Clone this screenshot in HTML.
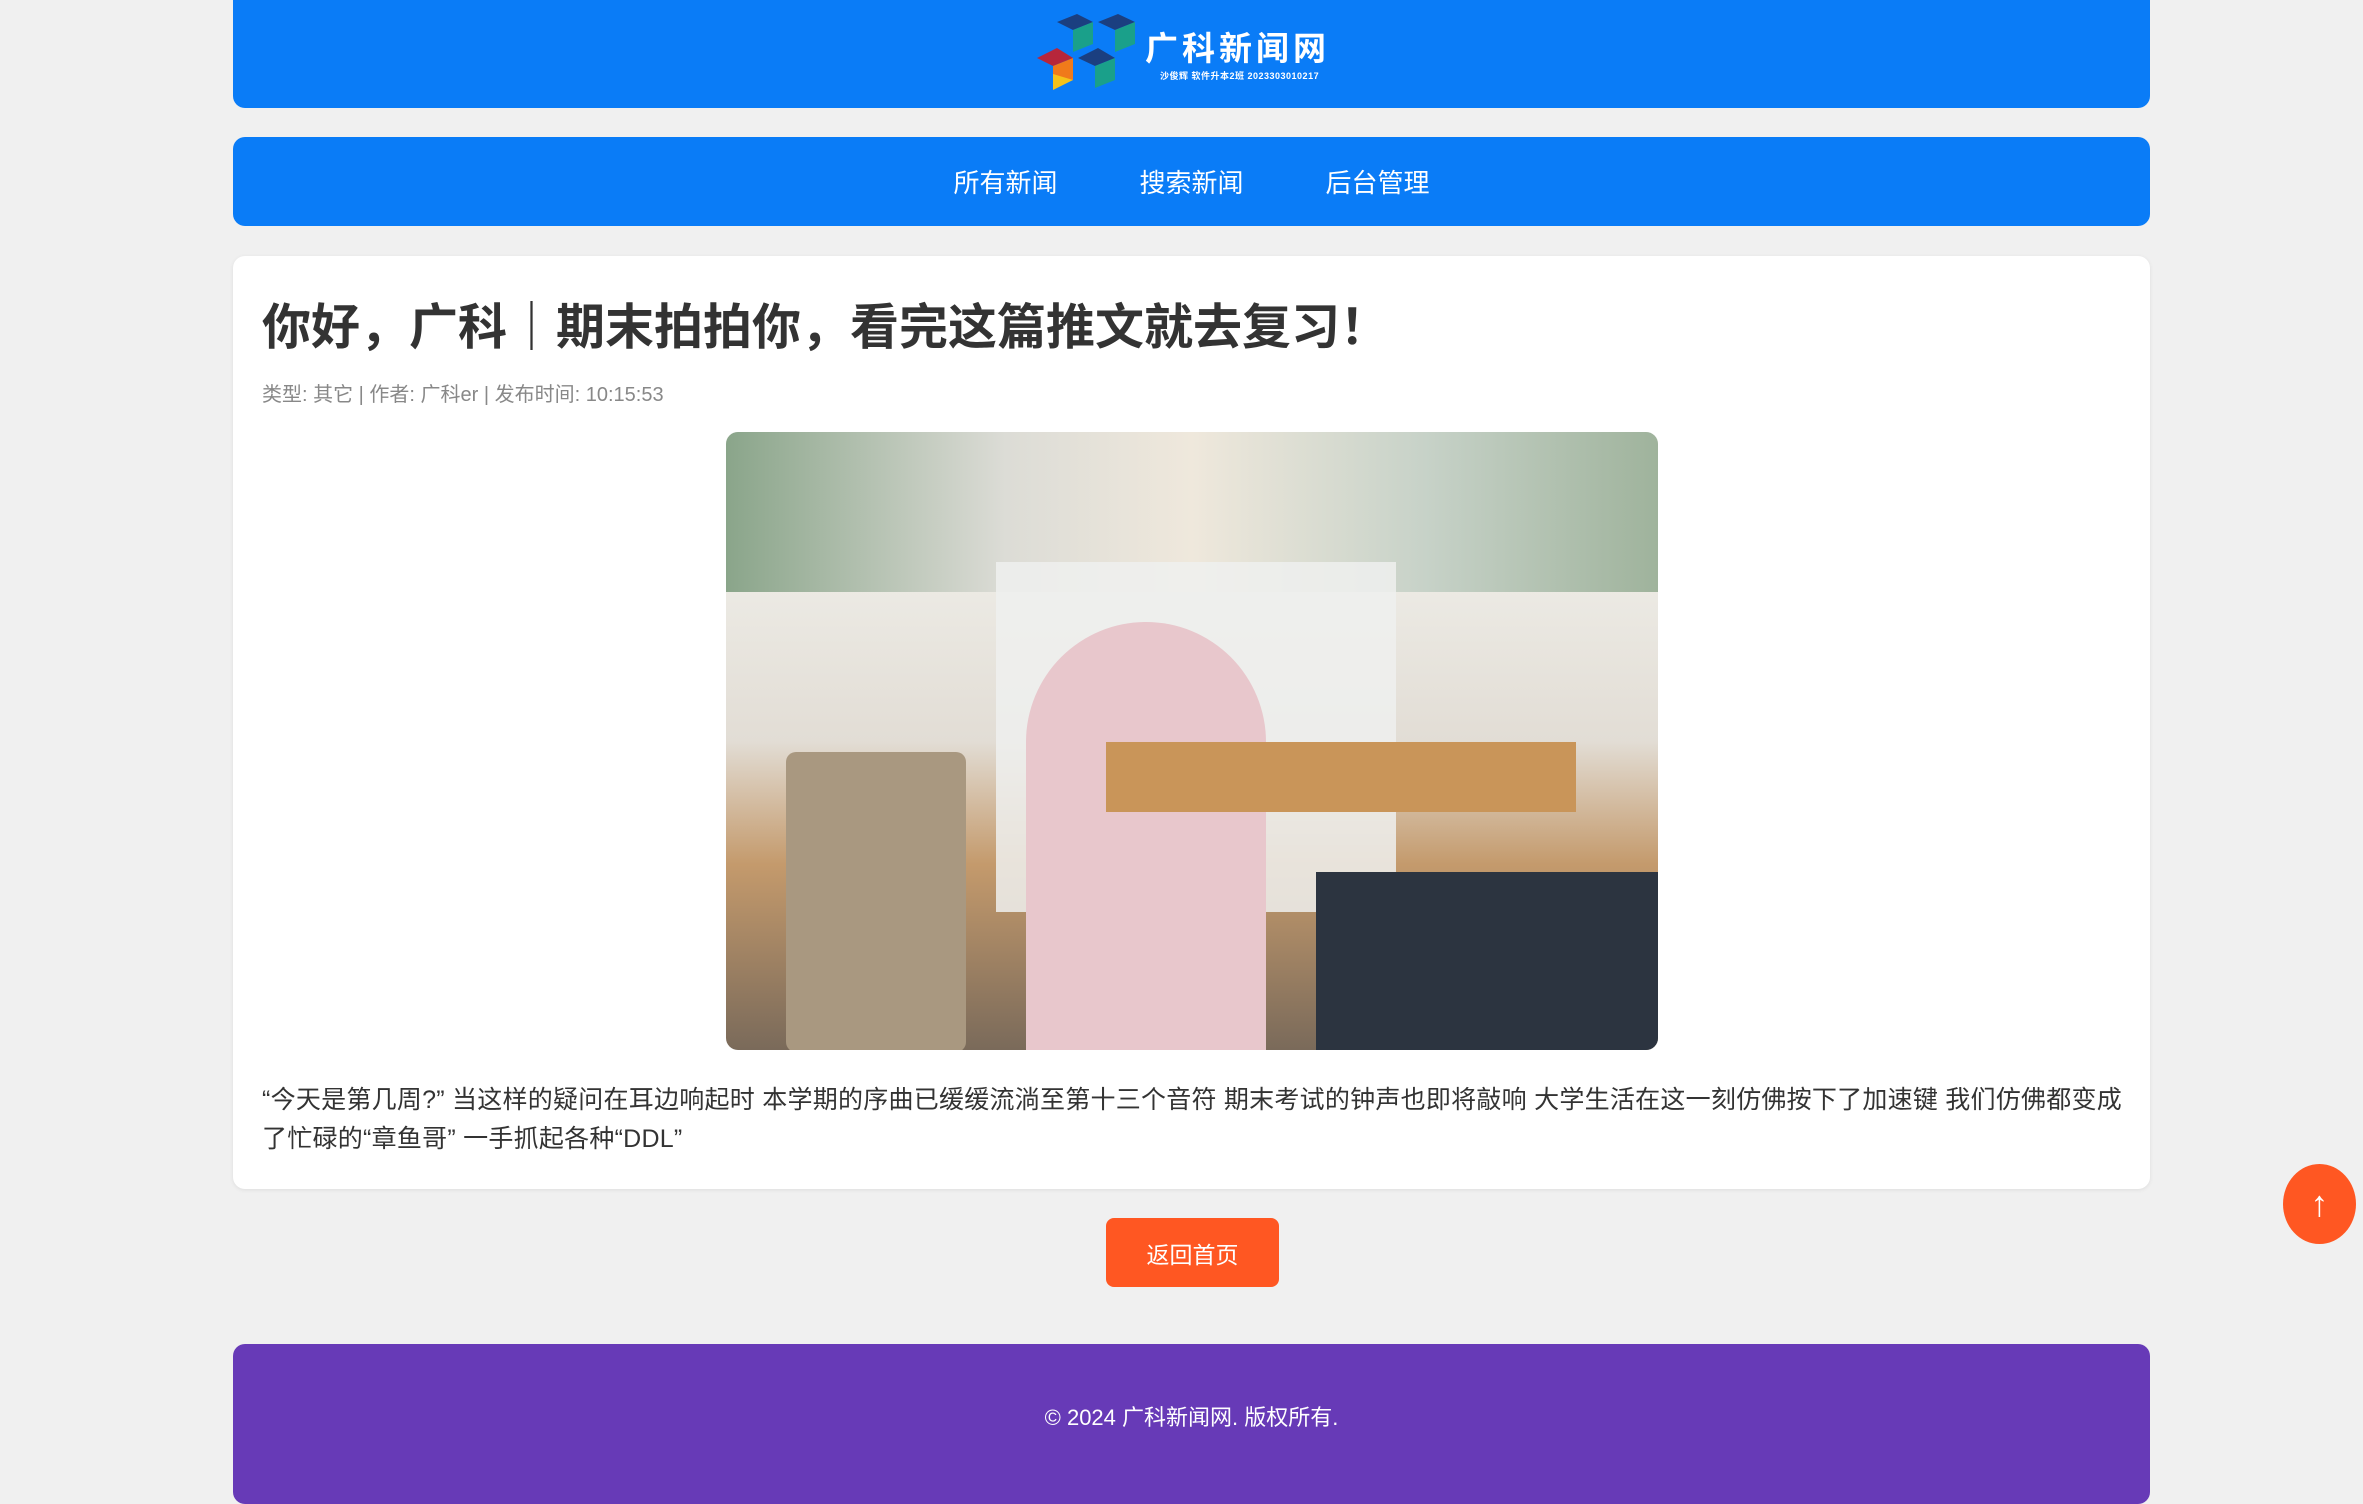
<!DOCTYPE html>
<html><head><meta charset="utf-8"><style>
body{margin:0;background:#f0f0f0;font-family:"Liberation Sans","Noto Sans CJK SC",sans-serif;width:2363px;height:1486px;overflow:hidden;position:relative}
.hdr{position:absolute;left:233px;top:0;width:1917px;height:108px;background:#0a7cf7;border-radius:0 0 12px 12px}
.nav{position:absolute;left:233px;top:137px;width:1917px;height:89px;background:#0a7cf7;border-radius:12px;display:flex;justify-content:center;align-items:center;gap:82px;color:#fff;font-size:26px}
.card{position:absolute;left:233px;top:256px;width:1917px;height:933px;background:#fff;border-radius:12px;box-shadow:0 1px 4px rgba(0,0,0,.08)}
h1{position:absolute;left:29px;top:32px;margin:0;font-size:49px;color:#333;font-weight:bold;white-space:nowrap}
.meta{position:absolute;left:29px;top:122px;font-size:20px;color:#888}
.img{position:absolute;left:493px;top:176px;width:932px;height:618px;border-radius:12px;overflow:hidden;background:linear-gradient(180deg,#d9ddd6 0%,#eceae4 25%,#e2ddd5 50%,#c49a6c 70%,#7a6a5a 100%)}
.p{position:absolute;left:29px;top:825px;width:1862px;font-size:25px;letter-spacing:0.25px;line-height:39px;color:#333}
.btn{position:absolute;left:1106px;top:1218px;width:173px;height:69px;background:#ff5722;border-radius:8px;color:#fff;font-size:23px;display:flex;align-items:center;justify-content:center}
.ft{position:absolute;left:233px;top:1344px;width:1917px;height:160px;background:#673ab7;border-radius:12px;color:#fff;font-size:22px;text-align:center;line-height:46px}
.up{position:absolute;left:2283px;top:1164px;width:73px;height:80px;border-radius:50%;background:#ff5722;color:#fff;font-size:36px;text-align:center;line-height:80px}
</style></head><body>
<div class="hdr">
<svg style="position:absolute;left:802px;top:14px" width="120" height="80" viewBox="0 0 120 80">
<polygon points="22,8 42,0 58,8 38,16" fill="#1b3f80"/><polygon points="38,16 58,8 58,30 38,38" fill="#1aa08a"/>
<polygon points="63,8 83,0 100,8 80,16" fill="#1b3f80"/><polygon points="80,16 100,8 100,30 80,38" fill="#1aa08a"/>
<polygon points="43,44 63,34 80,44 60,52" fill="#1b3f80"/><polygon points="60,52 80,44 80,66 60,74" fill="#1aa08a"/>
<polygon points="2,44 22,34 38,44 18,52" fill="#b7263b"/><polygon points="18,52 38,44 38,66 18,74" fill="#f07a1a"/><polygon points="18,60 38,66 18,76" fill="#f5c21a"/>
</svg>
<div style="position:absolute;left:912px;top:22px;color:#fff;font-size:33px;font-weight:bold;letter-spacing:4px">广科新闻网</div>
<div style="position:absolute;left:927px;top:69px;color:#fff;font-size:9px;font-weight:bold;letter-spacing:0.5px">沙俊辉 软件升本2班 2023303010217</div>
</div>
<div class="nav"><span>所有新闻</span><span>搜索新闻</span><span>后台管理</span></div>
<div class="card">
<h1>你好，广科｜期末拍拍你，看完这篇推文就去复习！</h1>
<div class="meta">类型: 其它 | 作者: 广科er | 发布时间: 10:15:53</div>
<div class="img">
<div style="position:absolute;left:0;top:0;width:932px;height:160px;background:linear-gradient(90deg,#8aa58a,#dcdcd6 30%,#efe8dc 50%,#c7d2c8 75%,#9fb39c)"></div>
<div style="position:absolute;left:270px;top:130px;width:400px;height:350px;background:#eef0ee;opacity:.85"></div>
<div style="position:absolute;left:300px;top:190px;width:240px;height:430px;background:#e8c7cc;border-radius:120px 120px 0 0"></div>
<div style="position:absolute;left:380px;top:310px;width:470px;height:70px;background:#c99559"></div>
<div style="position:absolute;left:60px;top:320px;width:180px;height:300px;background:#a99880;border-radius:10px"></div>
<div style="position:absolute;left:590px;top:440px;width:342px;height:178px;background:#2c3440"></div>
</div>
<div class="p">“今天是第几周?” 当这样的疑问在耳边响起时 本学期的序曲已缓缓流淌至第十三个音符 期末考试的钟声也即将敲响 大学生活在这一刻仿佛按下了加速键 我们仿佛都变成了忙碌的“章鱼哥” 一手抓起各种“DDL”</div>
</div>
<div class="btn">返回首页</div>
<div class="ft" style="padding-top:51px;box-sizing:border-box">© 2024 广科新闻网. 版权所有.</div>
<div class="up">↑</div>
</body></html>
